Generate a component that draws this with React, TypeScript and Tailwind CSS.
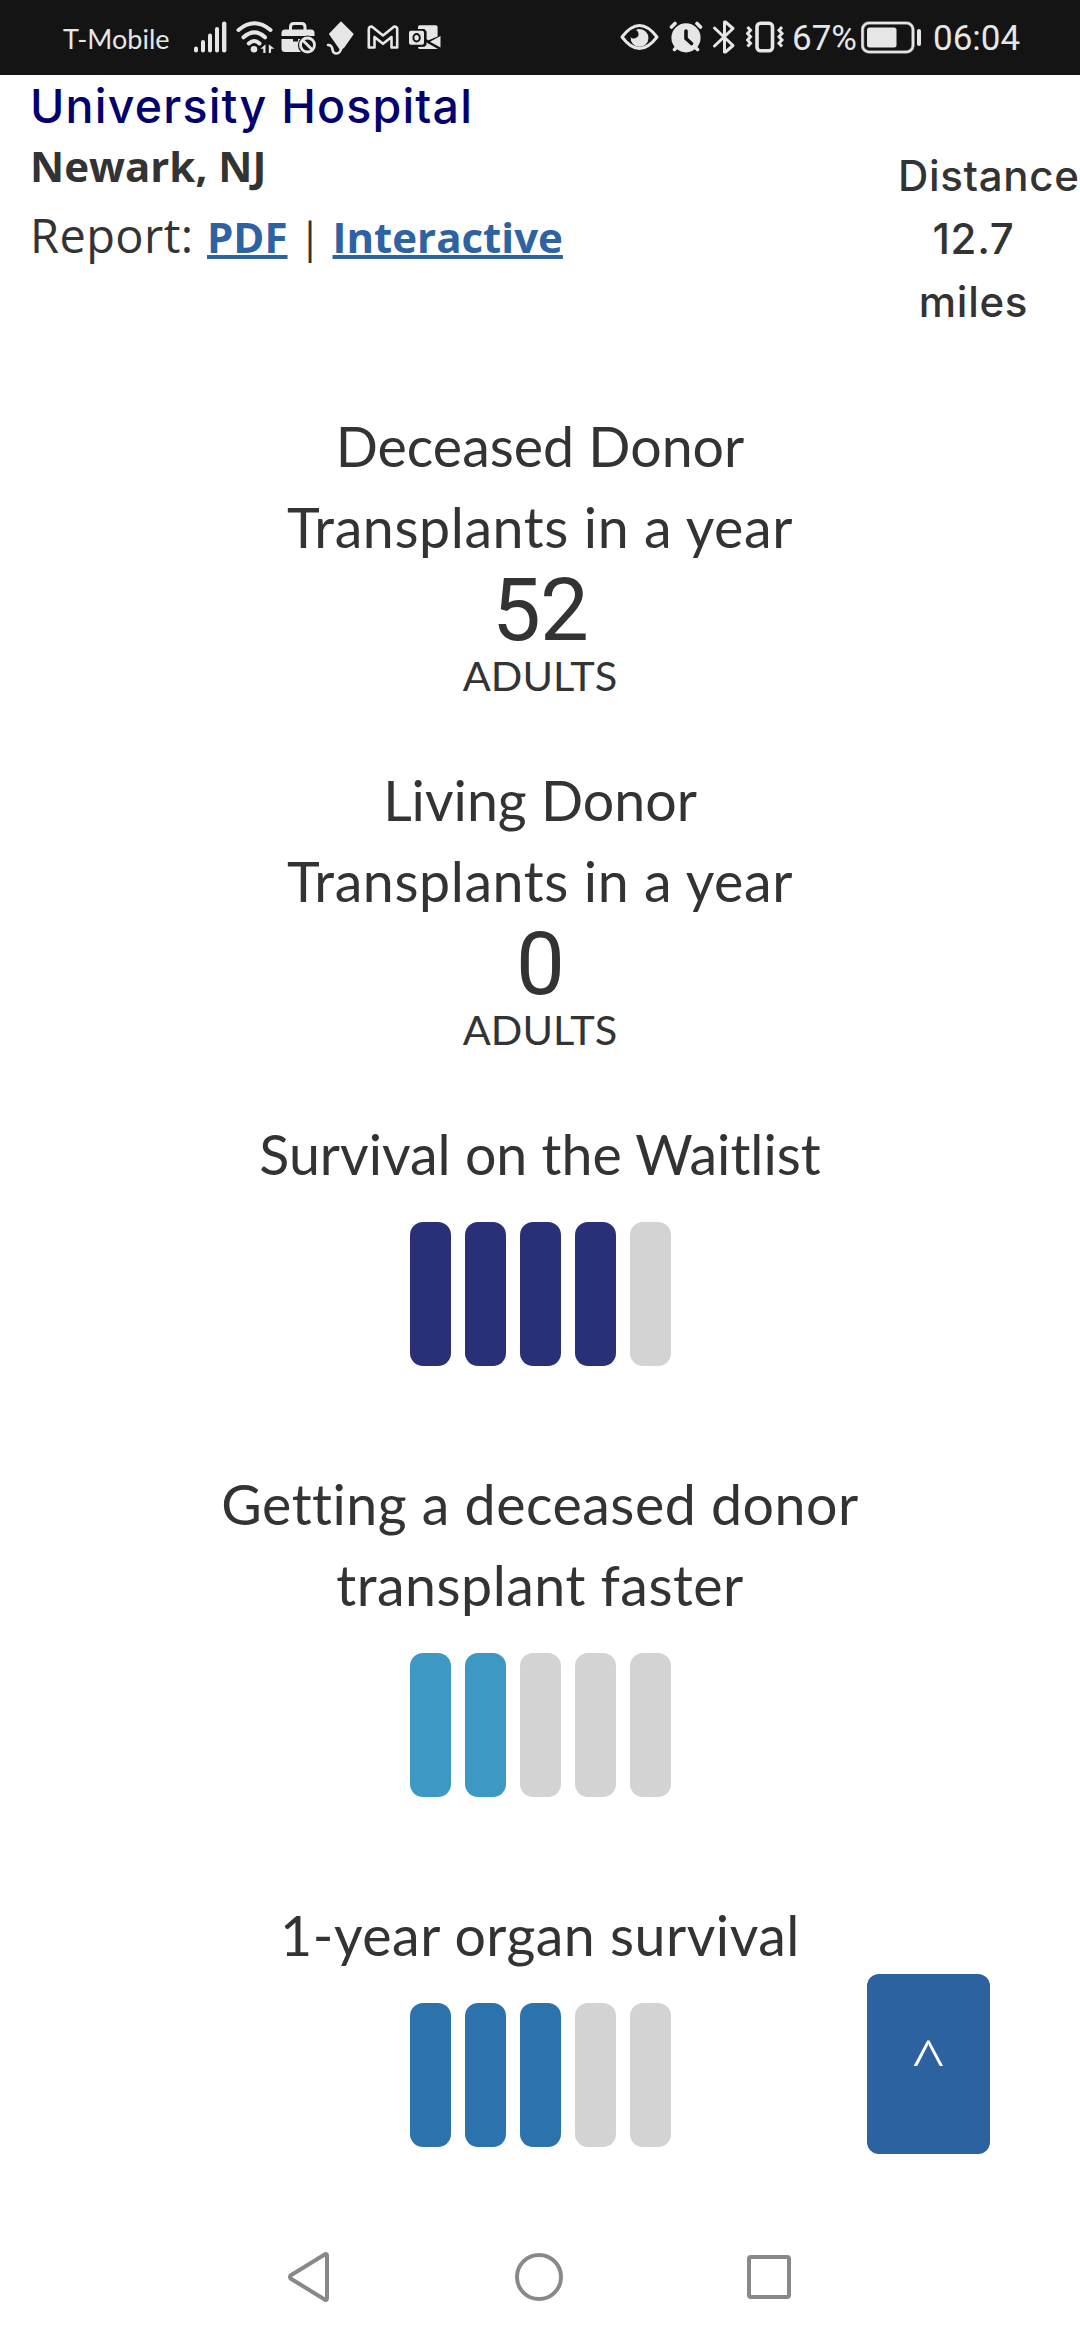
import clsx from "clsx";

function StatusBar() {
  return (
    <header className="flex h-[75px] items-start bg-[#141414] text-[#e6e6e6]">
      <span className="ml-[63px] mt-[19px] w-[129px] whitespace-nowrap text-[27px] leading-[40px]">
        T-Mobile
      </span>

      {/* signal */}
      <svg className="mt-[18px] h-10 w-11" viewBox="0 0 44 40" fill="currentColor">
        <rect x="2" y="28.5" width="4" height="6" rx="2" />
        <rect x="9" y="22" width="4" height="12.5" rx="2" />
        <rect x="16" y="15.5" width="4" height="19" rx="2" />
        <rect x="23" y="9" width="4" height="25.5" rx="2" />
        <rect x="30" y="3.5" width="4.4" height="31" rx="2" />
      </svg>

      {/* wifi */}
      <svg className="mt-[18px] h-10 w-[45px]" viewBox="0 0 45 40" fill="none" stroke="currentColor" strokeWidth="4" strokeLinecap="round">
        <path d="M2.5 12Q18.5 -1.5 34.5 12M7.5 19.3Q18.5 9.5 29 19.3M12.8 25.5Q18.3 20.5 23.5 25.5" />
        <circle cx="18" cy="31.3" r="3.3" fill="currentColor" stroke="none" />
        <path d="M24.5 30.8 29.5 26.3v8.7h-2.2v-4.2zM32.8 26.3l5.6 4.5h-3.2l-.4 4.2h-2z" fill="currentColor" stroke="none" />
      </svg>

      {/* briefcase */}
      <svg className="mt-[18px] h-10 w-[45px]" viewBox="0 0 45 40" fill="currentColor">
        <path d="M9.5 12V9q0-3.5 3.5-3.5h7.5q3.5 0 3.5 3.5v3" fill="none" stroke="currentColor" strokeWidth="3" />
        <path d="M.5 18v-3q0-3.5 3.5-3.5h26q3.5 0 3.5 3.5v3H.5zM.5 21H12v2.5h5V21h4q-6 7 0 13H4q-3.5 0-3.5-3.5z" />
        <circle cx="26.5" cy="27" r="9.6" fill="#141414" />
        <circle cx="26.5" cy="27" r="7" fill="none" stroke="currentColor" strokeWidth="2.8" />
        <path d="m21.5 22 10 10" stroke="currentColor" strokeWidth="2.8" />
      </svg>

      {/* kite */}
      <svg className="mt-[18px] h-10 w-[41px]" viewBox="0 0 41 40" fill="currentColor">
        <path d="M14.5 3.8q.5-.5 1 0L27.3 15.6q.5.6 0 1.2L18 30l-4 2L3.2 16.6q-.5-.6 0-1.2z" />
        <path d="M2 27q4 0 4.5 4.5Q7 35.5 10.5 35.5T15.5 30" fill="none" stroke="currentColor" strokeWidth="2.6" strokeLinecap="round" />
      </svg>

      {/* gmail */}
      <svg className="mt-[18px] h-10 w-[42px]" viewBox="0 0 42 40" fill="none" stroke="currentColor" strokeWidth="2.6" strokeLinejoin="round">
        <path d="M1.8 29.5V11q0-2.5 3-2.5L16 17.5l11.2-9q3 0 3 2.5v18.5h-5.7V19L16 25.8 7.5 19v10.5z" />
      </svg>

      {/* outlook */}
      <svg className="mt-[18px] h-10 w-8" viewBox="0 0 32 40" fill="currentColor">
        <path d="M9 11V9q0-1.8 1.8-1.8h16q1.8 0 1.8 1.8v9.5l-9 3.8-2-1V13.5L15.5 11zM9 29l6.5-.2 2-1.8v-2.5L29 31H10.5Q9 31 9 29zM31.5 18v11.5L21 23.7z" />
        <path d="M2 12.8h11q2 0 2 2v10q0 2-2 2H2q-2 0-2-2v-10q0-2 2-2z" />
        <ellipse cx="7.6" cy="19.8" rx="3.2" ry="3.7" fill="none" stroke="#141414" strokeWidth="2" />
      </svg>

      <div className="ml-auto mr-[62px] flex items-start">
        {/* eye */}
        <svg className="mt-[18px] h-10 w-[49px]" viewBox="0 0 49 40" fill="none">
          <path d="M2 19Q19.5-4 37 19 19.5 42 2 19z" stroke="currentColor" strokeWidth="3" strokeLinejoin="round" />
          <path d="M19.5 11a8.9 8.9 0 1 1-8.8 8q1.5 2.3 4.5 1.2 4.3-1.5 3.2-5.2Q18 13 16 12q1.5-1 3.5-1z" fill="currentColor" />
        </svg>

        {/* alarm */}
        <svg className="mt-[18px] h-10 w-[43px]" viewBox="0 0 43 40" fill="none" stroke="currentColor" strokeWidth="3.6" strokeLinecap="round">
          <circle cx="17" cy="19.8" r="14.6" fill="currentColor" stroke="none" />
          <path d="m2.5 9 3.5-3.5M31.5 9 28 5.5M5.5 31.5 8 29M28.5 31.5 26 29" />
          <path d="M17 13v7.5l5.5 5" stroke="#141414" strokeWidth="3.6" />
        </svg>

        {/* bluetooth */}
        <svg className="mt-[18px] h-10 w-[34px]" viewBox="0 0 34 40" fill="none" stroke="currentColor" strokeWidth="3" strokeLinecap="round" strokeLinejoin="round">
          <path d="M2.5 10 21 27.5l-7.5 6.5h-1V4h1L21 10.5 2.5 28" />
        </svg>

        {/* vibrate */}
        <svg className="mt-[18px] h-10 w-[46px]" viewBox="0 0 46 40" fill="none" stroke="currentColor">
          <rect x="11" y="5.3" width="15.5" height="27.5" rx="3.5" strokeWidth="3.6" />
          <path d="m1.5 9 3 3.2-3 3.3 3 3.3-3 3.2 3 3.3-3 3.2M36 9l-3 3.2 3 3.3-3 3.3 3 3.2-3 3.3 3 3.2" strokeWidth="3" />
        </svg>

        <span className="mt-[19px] w-[69px] whitespace-nowrap font-['Roboto',sans-serif] text-[35px] leading-[40px]">
          67%
        </span>

        {/* battery */}
        <svg className="mt-[18px] h-10 w-[72px]" viewBox="0 0 72 40" fill="none">
          <rect x="1.5" y="5" width="50.5" height="29" rx="6.5" stroke="#888" strokeWidth="3.5" />
          <rect x="1.5" y="5" width="50.5" height="29" rx="6.5" stroke="currentColor" strokeWidth="2.2" />
          <rect x="6" y="9.5" width="29.5" height="20" rx="2.5" fill="currentColor" />
          <rect x="56" y="11" width="4" height="17" rx="2" fill="currentColor" />
        </svg>

        <span className="mt-[19px] w-[85px] whitespace-nowrap font-['Roboto',sans-serif] text-[35px] leading-[40px]">
          06:04
        </span>
      </div>
    </header>
  );
}

type DonorCountProps = { kind: string; count: number };

function DonorCount({ kind, count }: DonorCountProps) {
  return (
    <section className="mb-[60px] text-center">
      <h3 className="text-[55.5px] leading-[81px]">
        {kind} Donor
        <span className="block tracking-[0.6px]">Transplants in a year</span>
      </h3>
      <p className="pt-[3px] font-['Roboto',sans-serif] text-[87px] leading-[81px] tracking-[-1px]">{count}</p>
      <p className="text-[41.5px] leading-[48px]">ADULTS</p>
    </section>
  );
}

type RatingProps = { lines: string[]; score: number; color: string; tracking?: string };

function Rating({ lines, score, color, tracking }: RatingProps) {
  return (
    <section className="mb-[97px] text-center">
      <h3 className={clsx("text-[55.5px] leading-[81px]", tracking)}>
        {lines.map((line) => (
          <span key={line} className="block">
            {line}
          </span>
        ))}
      </h3>
      <div className="mt-7 flex justify-center gap-[14px] pl-px">
        {[1, 2, 3, 4, 5].map((n) => (
          <div
            key={n}
            className={clsx("h-36 w-[41px] rounded-[13px]", n <= score ? color : "bg-[#d3d3d3]")}
          />
        ))}
      </div>
    </section>
  );
}

export default function App() {
  return (
    <div className="relative flex h-[2340px] w-[1080px] flex-col overflow-hidden bg-white font-['Lato',sans-serif] text-[#333] [font-variant-ligatures:none]">
      <StatusBar />

      <div className="flex h-[330px] justify-between pl-[30px]">
        <div className="font-['Open_Sans',sans-serif]">
          <h2 className="whitespace-nowrap font-['Inter',sans-serif] text-[46.5px] font-medium leading-[62px] tracking-[1.2px] text-[#04006d]">
            University Hospital
          </h2>
          <p className="text-[42px] font-bold leading-[57px]">Newark, NJ</p>
          <p className="flex items-baseline whitespace-nowrap text-[42px] leading-[83px]">
            <span className="w-[177px] text-[47px] tracking-[0.4px]">Report:</span>
            <a className="font-bold text-[#2d62a3] underline decoration-[4px]">PDF</a>
            <span className="w-[45px] text-center">|</span>
            <a className="font-bold text-[#2d62a3] underline decoration-[4px]">Interactive</a>
          </p>
        </div>
        <div className="mr-[31px] mt-[69px] w-[151px] text-center font-['Inter',sans-serif] text-[42px] font-medium leading-[63px] tracking-[0.7px]">
          Distance
          <br />
          12.7
          <br />
          miles
        </div>
      </div>

      <main className="flex-1">
        <DonorCount kind="Deceased" count={52} />
        <DonorCount kind="Living" count={0} />
        <Rating lines={["Survival on the Waitlist"]} score={4} color="bg-[#2a3078]" />
        <Rating
          lines={["Getting a deceased donor", "transplant faster"]}
          score={2}
          color="bg-[#3e98c4]"
          tracking="tracking-[0.5px]"
        />
        <Rating
          lines={["1-year organ survival"]}
          score={3}
          color="bg-[#2c72ac]"
          tracking="tracking-[0.5px]"
        />
      </main>

      {/* back to top */}
      <button className="absolute left-[867px] top-[1974px] flex h-[180px] w-[123px] items-center justify-center rounded-xl bg-[#2d62a1] text-[72px] font-light text-white">
        ^
      </button>

      <nav className="absolute inset-x-0 bottom-0 flex h-[126px] items-center justify-between bg-white pl-[286px] pr-[287px]">
        <svg className="h-[50px] w-[46px]" viewBox="0 0 46 50" fill="none" stroke="#888" strokeWidth="4" strokeLinejoin="round">
          <path d="M4.5 23.5 39.5 2q1.5 0 1.5 2v42q0 2-1.5 2L4.5 26.5q-1-1.5 0-3z" />
        </svg>
        <svg className="h-[50px] w-[50px]" viewBox="0 0 50 50" fill="none" stroke="#888" strokeWidth="4">
          <circle cx="25" cy="25" r="22" />
        </svg>
        <svg className="h-[50px] w-[48px]" viewBox="0 0 48 50" fill="none" stroke="#888" strokeWidth="4">
          <rect x="4" y="5" width="40" height="40" rx="2" />
        </svg>
      </nav>
    </div>
  );
}
